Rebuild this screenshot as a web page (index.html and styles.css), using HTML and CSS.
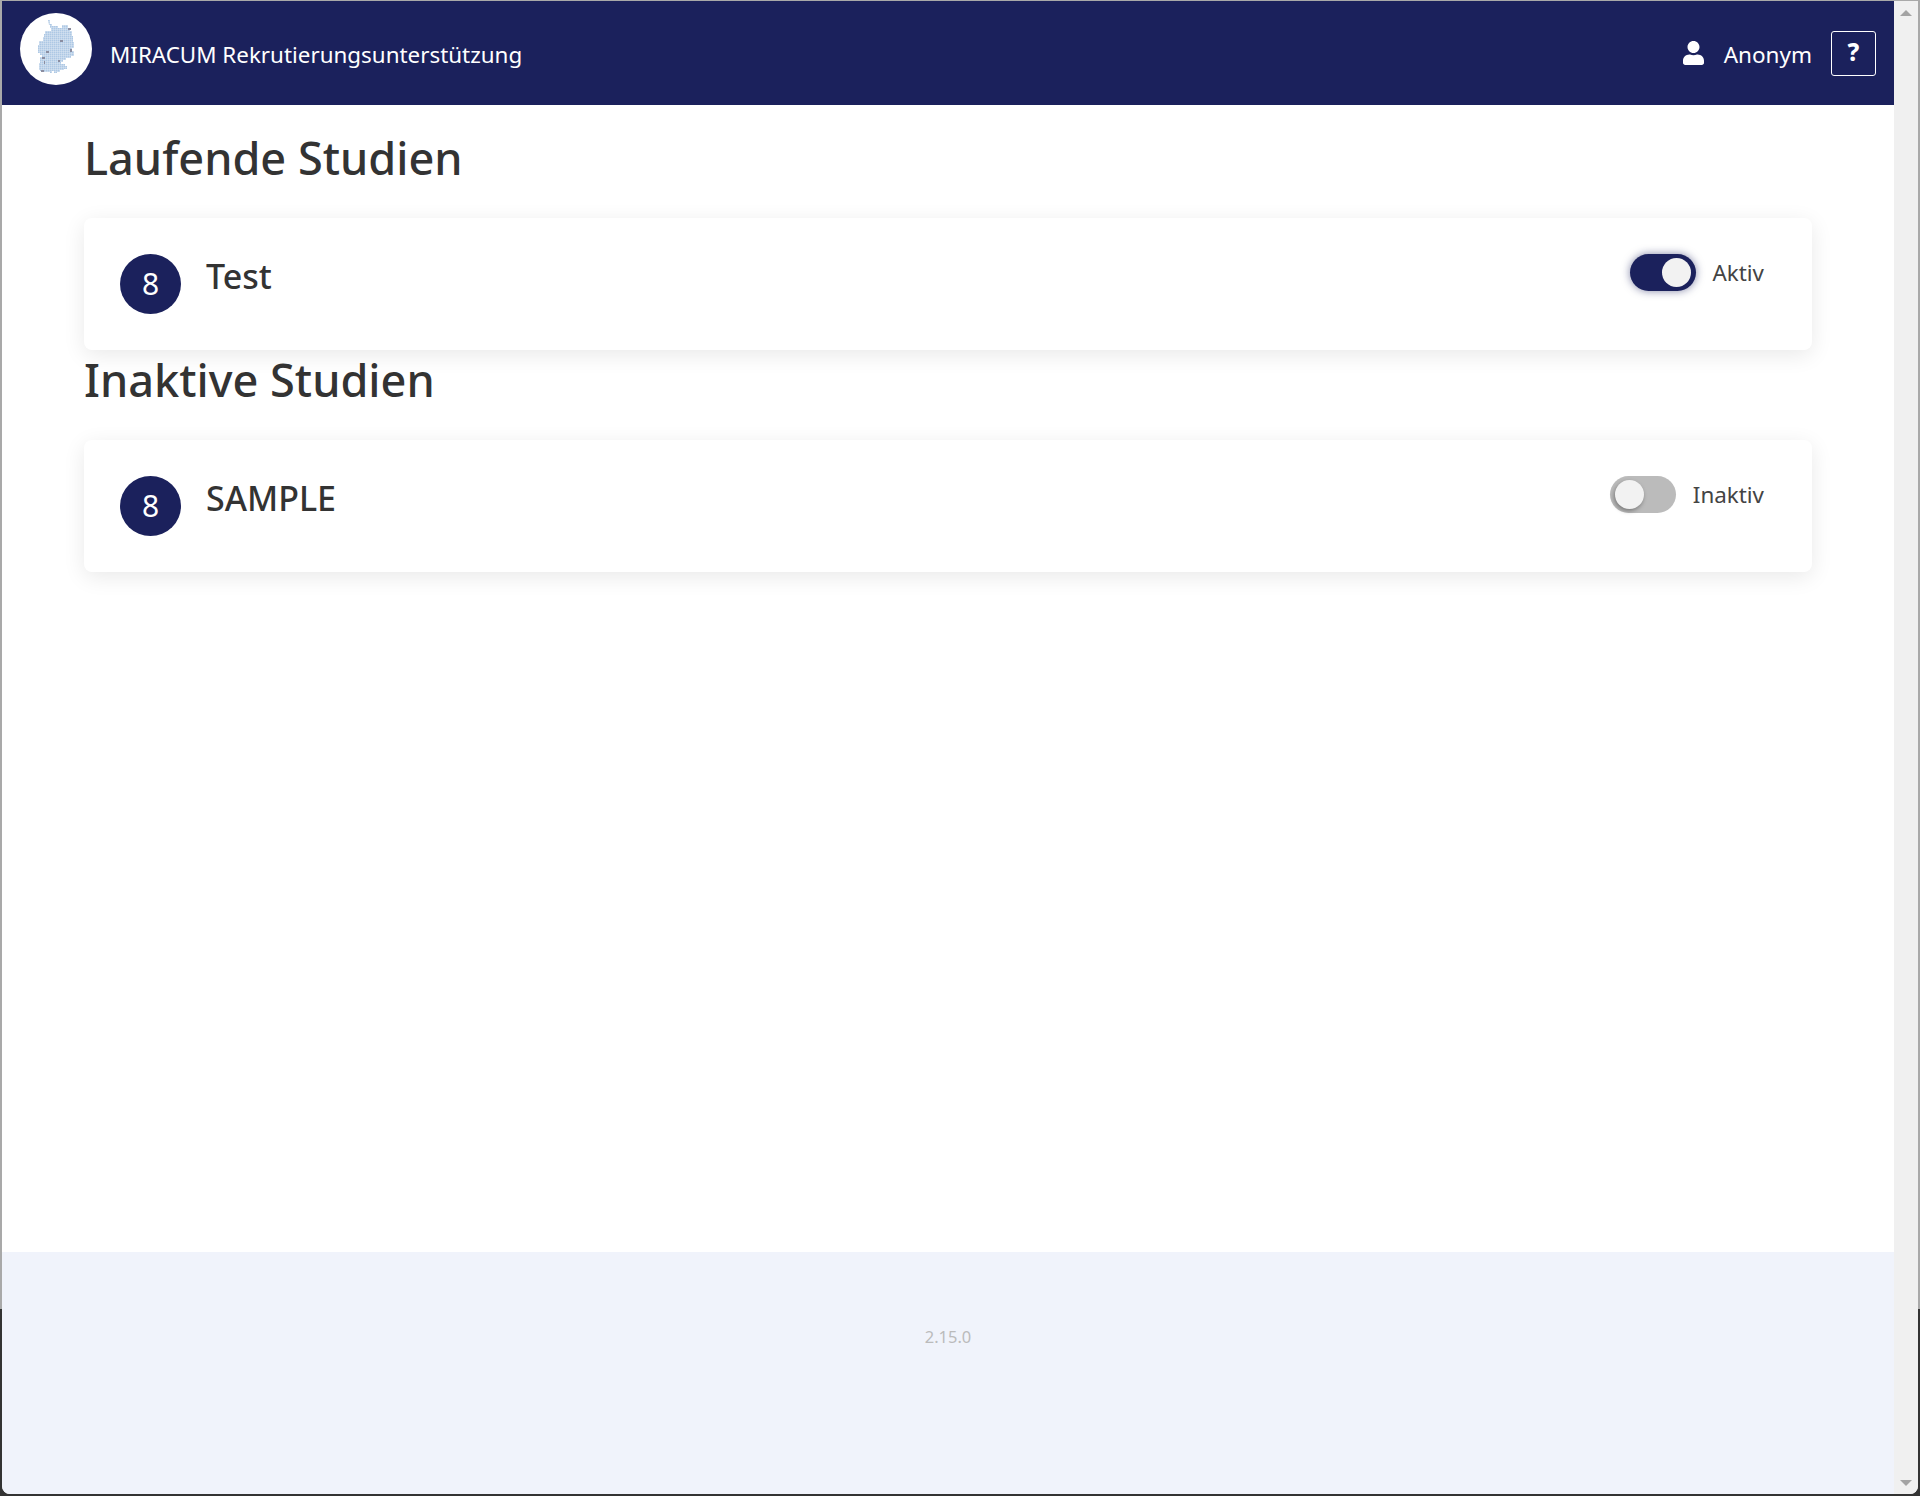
FILE: index.html
```html
<!DOCTYPE html>
<html lang="de">
<head>
<meta charset="utf-8">
<title>MIRACUM Rekrutierungsunterstützung</title>
<link rel="stylesheet" href="styles.css">
</head>
<body>
<div class="window">
  <div class="page">
    <header class="topbar">
      <div class="brand">
        <svg class="logo" viewBox="20 13 72 72" aria-hidden="true">
          <defs>
            <pattern id="dots" x="0" y="0" width="2" height="2" patternUnits="userSpaceOnUse">
              <rect width="2" height="2" fill="#dfe9f4"/>
              <rect width="1.55" height="1.55" fill="#adc8e4"/>
            </pattern>
          </defs>
          <circle cx="56" cy="49" r="36" fill="#fff"/>
          <path fill="url(#dots)" d="M48 20h2v4h2v2h6v2h4v-3h6v3h2v3h2v5h1v6h1v6h-2v3h2v5h-3v2h-5v2h-3v2h-2v2h4v2h2v3h-3v1h-4v2h-3v1h-3v-2h-2v2h-2v-1h-6v-1h-4v-1h-1v-7h1v-6h2v-2h-2v-2h-2v-8h1v-4h4v-4h1v-3h1v-3h6v-3h-1v-3h-1z"/>
          <g fill="#8b8da0">
            <rect x="60" y="40" width="3" height="2"/>
            <rect x="46" y="51" width="3" height="2"/>
            <rect x="42" y="57" width="3" height="2"/>
            <rect x="70" y="49" width="2" height="3"/>
            <rect x="58" y="60" width="2" height="2"/>
            <rect x="41" y="70" width="3" height="2"/>
            <rect x="44" y="61" width="1" height="3"/>
            <rect x="68" y="28" width="3" height="2"/>
          </g>
        </svg>
        <span class="brand-name">MIRACUM Rekrutierungsunterstützung</span>
      </div>
      <div class="account">
        <svg class="user-icon" viewBox="0 0 448 512" aria-hidden="true">
          <path fill="#fff" d="M224 256c70.7 0 128-57.3 128-128S294.7 0 224 0 96 57.3 96 128s57.3 128 128 128zm89.6 32h-16.7c-22.2 10.2-46.9 16-72.9 16s-50.6-5.8-72.9-16h-16.7C60.2 288 0 348.2 0 422.4V464c0 26.5 21.5 48 48 48h352c26.5 0 48-21.5 48-48v-41.6c0-74.2-60.2-134.4-134.4-134.4z"/>
        </svg>
        <span class="user-name">Anonym</span>
        <button class="help" type="button">?</button>
      </div>
    </header>

    <main class="content">
      <section class="group">
        <h2 class="group-title">Laufende Studien</h2>
        <article class="card">
          <div class="badge">8</div>
          <div class="study-name">Test</div>
          <div class="state">
            <span class="switch switch-on"><span class="knob"></span></span>
            <span class="state-label">Aktiv</span>
          </div>
        </article>
      </section>
      <section class="group">
        <h2 class="group-title">Inaktive Studien</h2>
        <article class="card">
          <div class="badge">8</div>
          <div class="study-name">SAMPLE</div>
          <div class="state">
            <span class="switch switch-off"><span class="knob"></span></span>
            <span class="state-label">Inaktiv</span>
          </div>
        </article>
      </section>
    </main>

    <footer class="footer">2.15.0</footer>
  </div>
  <div class="scrollbar">
    <span class="arrow arrow-up"></span>
    <span class="arrow arrow-down"></span>
  </div>
</div>
</body>
</html>
```

FILE: styles.css
```css
* {
  box-sizing: border-box;
}

html,
body {
  height: 100%;
  margin: 0;
}

body {
  padding: 1px 2px 2px;
  overflow: hidden;
  font-family: "Noto Sans", "Open Sans", sans-serif;
  color: #333;
  background: linear-gradient(to bottom, #a9a9a9 0, #a9a9a9 1309px, #333 1309px, #333 100%);
}

.window {
  display: flex;
  height: 100%;
  background: #fff;
  border-radius: 0 0 8px 8px;
  overflow: hidden;
}

.page {
  display: flex;
  flex: 1;
  flex-direction: column;
  min-width: 0;
}

.topbar {
  display: flex;
  flex: none;
  align-items: center;
  justify-content: space-between;
  height: 104px;
  padding: 0 18px;
  background: #1b215c;
  color: #fff;
}

.brand {
  display: flex;
  align-items: center;
}

.logo {
  width: 72px;
  height: 72px;
  margin-top: -8px;
}

.brand-name {
  margin: 2px 0 0 18px;
  font-size: 22.4px;
}

.account {
  display: flex;
  align-items: center;
}

.user-icon {
  width: 21px;
  height: 24px;
  margin-left: 1px;
}

.user-name {
  margin: 2px 0 0 20px;
  font-size: 22.5px;
}

.help {
  width: 45px;
  height: 45px;
  margin-left: 19px;
  padding: 0 0 4px;
  border: 1px solid #fff;
  border-radius: 3px;
  background: transparent;
  color: #fff;
  font: 800 24px "Noto Sans", sans-serif;
}

.content {
  flex: 1;
  padding: 23px 82px 0;
}

.group-title {
  height: 90px;
  margin: 0;
  font-size: 45.1px;
  font-weight: 500;
  line-height: 60px;
  color: #333;
}

.card {
  display: flex;
  align-items: flex-start;
  height: 132px;
  padding: 36px 48px 36px 36px;
  border-radius: 8px;
  background: #fff;
  box-shadow: 0 5px 22px rgba(0, 0, 0, 0.09);
}

.badge {
  flex: none;
  width: 61px;
  height: 60px;
  border-radius: 50%;
  background: #1b215c;
  color: #fff;
  font-size: 30px;
  line-height: 60px;
  text-align: center;
}

.study-name {
  flex: 1;
  margin-left: 25px;
  font-size: 34px;
  font-weight: 500;
  line-height: 44px;
}

.state {
  display: flex;
  align-items: center;
  height: 37px;
}

.switch {
  display: flex;
  align-items: center;
  width: 66px;
  height: 37px;
  padding: 0 4px;
  border-radius: 19px;
}

.switch-on {
  justify-content: flex-end;
  background: #1b215c;
  box-shadow: 0 0 8px rgba(27, 33, 92, 0.55);
}

.switch-off {
  background: #bbb;
}

.knob {
  width: 29px;
  height: 29px;
  border-radius: 50%;
  background: #f2f2f2;
}

.switch-on .knob {
  margin-right: 1px;
}

.switch-off .knob {
  box-shadow: -1px 2px 4px rgba(0, 0, 0, 0.35);
  margin-left: 1px;
}

.state-label {
  margin-left: 17px;
  font-size: 22.4px;
  color: #444;
}

.footer {
  display: flex;
  flex: none;
  align-items: center;
  justify-content: center;
  height: 242px;
  padding-bottom: 74px;
  background: #f0f3fb;
  color: #bbb;
  font-size: 16.5px;
}

.scrollbar {
  display: flex;
  flex: none;
  flex-direction: column;
  justify-content: space-between;
  align-items: center;
  width: 24px;
  padding: 9px 0 8px;
  background: #f0f0f0;
}

.arrow {
  width: 0;
  height: 0;
  border-left: 6px solid transparent;
  border-right: 6px solid transparent;
}

.arrow-up {
  border-bottom: 6px solid #a3a3a3;
}

.arrow-down {
  border-top: 6px solid #a3a3a3;
}
```
